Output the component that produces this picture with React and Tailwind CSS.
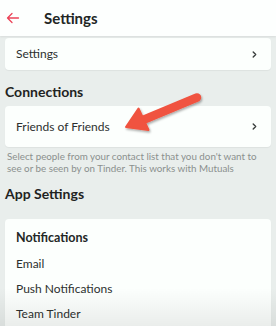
import React from 'react';

function Chevron() {
  return (
    <svg width="5" height="7" viewBox="0 0 5 7" className="shrink-0">
      <path d="M1.2 1 L3.7 3.5 L1.2 6" fill="none" stroke="#3a3e3d" strokeWidth="1.4" strokeLinecap="round" strokeLinejoin="round" />
    </svg>
  );
}

function Row({ label, tall }) {
  return (
    <div className={`flex items-center justify-between rounded-[4px] bg-[#fcfffd] pl-[11px] pr-[14px] shadow-[0_1px_1px_rgba(0,0,0,0.05)] ${tall ? 'h-[41px]' : 'h-[32px]'}`}>
      <span className="text-[12px] text-[#2c302f]">{label}</span>
      <Chevron />
    </div>
  );
}

export default function App() {
  return (
    <div className="relative h-[326px] w-[276px] overflow-hidden bg-[#e9eeec] font-['Lato',sans-serif]">
      <header className="relative z-10 flex h-[36px] items-center bg-[#fdfffe] shadow-[0_1px_2px_rgba(0,0,0,0.08)]">
        <svg width="14" height="12" viewBox="0 0 14 12" className="ml-[6px]">
          <path d="M12.5 6 H1.5 M6 1.5 L1.5 6 L6 10.5" fill="none" stroke="#ec4358" strokeWidth="1.3" strokeLinecap="round" strokeLinejoin="round" />
        </svg>
        <h1 className="ml-[24px] text-[15px] font-bold text-[#222625]">Settings</h1>
      </header>

      <main className="px-[5px]">
        <div className="mt-[2px]">
          <Row label="Settings" />
        </div>

        <h2 className="mt-[12px] h-[20px] text-[14px] font-bold leading-[20px] text-[#1f2322]">Connections</h2>
        <div className="mt-[4px]">
          <Row label="Friends of Friends" tall />
        </div>
        <p className="mt-[3px] max-w-[262px] px-[2px] text-[9.8px] leading-[12px] text-[#8b908e]">
          Select people from your contact list that you don't want to see or be seen by on Tinder. This works with Mutuals
        </p>

        <h2 className="mt-[10px] h-[20px] text-[14px] font-bold leading-[20px] text-[#1f2322]">App Settings</h2>
        <div className="mt-[15px] rounded-[4px] bg-[#fcfffd] px-[11px] pt-[9px] pb-[10px] shadow-[0_1px_1px_rgba(0,0,0,0.05)]">
          <div className="h-[20px] text-[12.5px] font-bold leading-[20px] text-[#232726]">Notifications</div>
          <div className="mt-[6px] flex flex-col gap-[5px] text-[12px] leading-[20px] text-[#2c302f]">
            <div>Email</div>
            <div>Push Notifications</div>
            <div>Team Tinder</div>
          </div>
        </div>
      </main>

      <svg className="pointer-events-none absolute left-0 top-0" width="276" height="326" viewBox="0 0 276 326">
        <defs>
          <filter id="sh" x="-20%" y="-20%" width="140%" height="140%">
            <feDropShadow dx="1" dy="1.5" stdDeviation="1.2" floodColor="#000" floodOpacity="0.35" />
          </filter>
        </defs>
        <g filter="url(#sh)" fill="#f0533f" stroke="#f0533f" strokeLinejoin="round">
          <line x1="197" y1="97.5" x2="143" y2="120" strokeWidth="8.5" strokeLinecap="round" />
          <polygon points="126,127 138.5,108.5 148.5,130" strokeWidth="2" />
        </g>
      </svg>

      <div className="pointer-events-none absolute bottom-0 left-0 h-[38px] w-full bg-gradient-to-b from-transparent to-[rgba(0,0,0,0.07)]" />
    </div>
  );
}
